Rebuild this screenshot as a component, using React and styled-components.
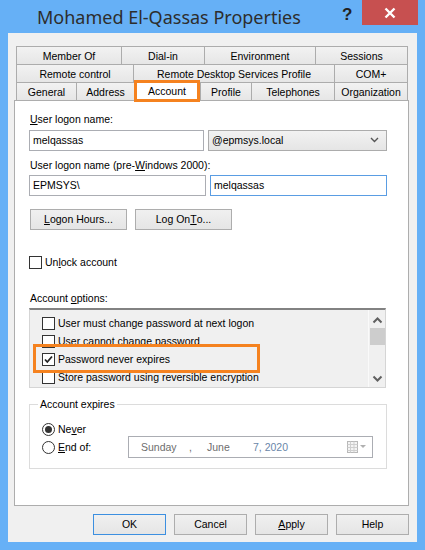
import React from 'react'
import styled, { createGlobalStyle } from 'styled-components'

const Global = createGlobalStyle`
  html, body { margin: 0; padding: 0; }
  body { font-family: "Liberation Sans", Arial, sans-serif; }
`;

const U = ({ children }) => <Mn>{children}</Mn>

function Check({ checked }) {
  return (
    <Box>
      {checked && (
        <svg width="11" height="11" viewBox="0 0 11 11">
          <path d="M2 5.5 L4.3 8 L9 2.5" fill="none" stroke="#222" strokeWidth="1.8" />
        </svg>
      )}
    </Box>
  )
}

const rows = [
  [['Member Of', 105], ['Dial-in', 83], ['Environment', 111], ['Sessions', 93]],
  [['Remote control', 117], ['Remote Desktop Services Profile', 201], ['COM+', 74]],
  [['General', 60], ['Address', 58], ['Account', 66], ['Profile', 51], ['Telephones', 83], ['Organization', 74]],
]

const options = [
  'User must change password at next logon',
  'User cannot change password',
  'Password never expires',
  'Store password using reversible encryption',
]

function App() {
  return (
    <Window>
      <Global />
      <TitleBar>
        <Title>Mohamed El-Qassas Properties</Title>
        <HelpGlyph>?</HelpGlyph>
        <CloseBtn>
          <svg width="12" height="12" viewBox="0 0 12 12">
            <path d="M1.5 1.5 L10.5 10.5 M10.5 1.5 L1.5 10.5" stroke="#fff" strokeWidth="2.4" />
          </svg>
        </CloseBtn>
      </TitleBar>
      <Client>
        <Tabs>
          {rows.map((row, i) => (
            <TabRow key={i}>
              {row.map(([name, w], j) => (
                <Tab key={name} $w={w} $last={j === row.length - 1} $active={name === 'Account'}>
                  {name}
                </Tab>
              ))}
            </TabRow>
          ))}
        </Tabs>
        <Panel>
          <Label $top={11}><U>U</U>ser logon name:</Label>
          <FieldRow $top={4}>
            <TextBox>melqassas</TextBox>
            <Select>
              @epmsys.local
              <svg width="9" height="6" viewBox="0 0 9 6">
                <path d="M1 1 L4.5 4.5 L8 1" fill="none" stroke="#555" strokeWidth="1.4" />
              </svg>
            </Select>
          </FieldRow>
          <Label $top={7}>User logon name (pre-<U>W</U>indows 2000):</Label>
          <FieldRow $top={3}>
            <TextBox>EPMSYS\</TextBox>
            <TextBox $focus>melqassas</TextBox>
          </FieldRow>
          <BtnRow>
            <Btn $w={97}><U>L</U>ogon Hours...</Btn>
            <Btn $w={97}>Log On <U>T</U>o...</Btn>
          </BtnRow>
          <CheckRow $top={25}>
            <Check />
            <span>Un<U>l</U>ock account</span>
          </CheckRow>
          <Label $top={22}>Account <U>o</U>ptions:</Label>
          <ListBox>
            <Items>
              {options.map((o) => (
                <Item key={o}>
                  <Check checked={o === 'Password never expires'} />
                  <span>{o}</span>
                </Item>
              ))}
            </Items>
            <ScrollBar>
              <svg width="11" height="7" viewBox="0 0 11 7">
                <path d="M1.5 5.5 L5.5 1.5 L9.5 5.5" fill="none" stroke="#606060" strokeWidth="2" />
              </svg>
              <Thumb />
              <Spacer />
              <svg width="11" height="7" viewBox="0 0 11 7">
                <path d="M1.5 1.5 L5.5 5.5 L9.5 1.5" fill="none" stroke="#606060" strokeWidth="2" />
              </svg>
            </ScrollBar>
            <Highlight />
          </ListBox>
          <Group>
            <Legend>Account expires</Legend>
            <RadioRow $top={11}>
              <Radio $on />
              <span>Ne<U>v</U>er</span>
            </RadioRow>
            <RadioRow $top={0}>
              <Radio />
              <RadioText><U>E</U>nd of:</RadioText>
              <DatePicker>
                <DatePart $w={48}>Sunday</DatePart>
                <DatePart $w={18}>,</DatePart>
                <DatePart $w={46}>June</DatePart>
                <DatePart $w={60} $blue>7, 2020</DatePart>
                <CalIcon>
                  <svg width="20" height="12" viewBox="0 0 20 12">
                    <rect x="0.5" y="0.5" width="10" height="11" fill="#f4f4f4" stroke="#b8b8b8" />
                    <path d="M0.5 3.5 H10.5 M0.5 6.5 H10.5 M0.5 9.5 H10.5 M3.5 0.5 V11.5 M7 0.5 V11.5" stroke="#cfcfcf" />
                    <path d="M13 4 L19 4 L16 7 Z" fill="#b0b0b0" />
                  </svg>
                </CalIcon>
              </DatePicker>
            </RadioRow>
          </Group>
        </Panel>
        <ButtonBar>
          <Btn $w={73} $default>OK</Btn>
          <Btn $w={73}>Cancel</Btn>
          <Btn $w={73}><U>A</U>pply</Btn>
          <Btn $w={73}>Help</Btn>
        </ButtonBar>
      </Client>
    </Window>
  )
}

export default App

const Window = styled.div`
  width: 425px;
  height: 550px;
  background: #66b0f6;
  display: flex;
  flex-direction: column;
  box-sizing: border-box;
  font-size: 10.5px;
  color: #000;
`;

const TitleBar = styled.div`
  height: 33px;
  display: flex;
  align-items: flex-start;
  flex-shrink: 0;
`;

const Title = styled.div`
  margin: 8px 0 0 37px;
  font-family: "Noto Sans", "Open Sans", sans-serif;
  font-size: 18px;
  line-height: 18.5px;
  color: #2d2d2d;
`;

const HelpGlyph = styled.div`
  margin: 5px 0 0 auto;
  width: 20px;
  font-family: "Liberation Sans", Arial, sans-serif;
  font-weight: bold;
  font-size: 17px;
  color: #222;
`;

const CloseBtn = styled.div`
  width: 56px;
  height: 25px;
  margin: 0 7px 0 0;
  background: #c75050;
  display: flex;
  align-items: center;
  justify-content: center;
`;

const Client = styled.div`
  flex: 1;
  margin: 0 8px 8px;
  background: #f0f0f0;
  padding: 13px 8px 0 6px;
  display: flex;
  flex-direction: column;
`;

const Tabs = styled.div`
  margin: 0 1px 0 2px;
  display: flex;
  flex-direction: column;
`;

const TabRow = styled.div`
  display: flex;
  align-items: flex-start;
`;

const Tab = styled.div`
  box-sizing: border-box;
  width: ${(p) => p.$w}px;
  height: ${(p) => (p.$active ? 22 : 18)}px;
  margin: ${(p) => (p.$active ? '-2px 0 -2px' : '0')};
  background: ${(p) => (p.$active ? '#fff' : 'linear-gradient(#f2f2f2, #e6e6e6)')};
  border: ${(p) => (p.$active ? '3px solid #f5821f' : '1px solid #acacac')};
  border-right: ${(p) => (p.$active ? '3px solid #f5821f' : p.$last ? '1px solid #acacac' : 'none')};
  border-bottom: ${(p) => (p.$active ? '3px solid #f5821f' : 'none')};
  position: relative;
  z-index: ${(p) => (p.$active ? 2 : 0)};
  display: flex;
  align-items: center;
  justify-content: center;
  white-space: nowrap;
  padding-bottom: ${(p) => (p.$active ? 1 : 0)}px;
`;

const Panel = styled.div`
  box-sizing: border-box;
  height: 406px;
  background: #fff;
  border: 1px solid #adadad;
  padding: 0 22px 0 14px;
  display: flex;
  flex-direction: column;
  align-items: flex-start;
`;

const Mn = styled.span`
  text-decoration: underline;
`;

const Label = styled.div`
  margin: ${(p) => p.$top}px 0 0 1px;
  line-height: 14px;
  white-space: nowrap;
`;

const FieldRow = styled.div`
  margin-top: ${(p) => p.$top}px;
  width: 358px;
  display: flex;
  gap: 4px;
`;

const TextBox = styled.div`
  box-sizing: border-box;
  flex: 1;
  height: 21px;
  border: 1px solid ${(p) => (p.$focus ? '#5a9de3' : '#abadb3')};
  background: #fff;
  padding: 0 3px 1px;
  display: flex;
  align-items: center;
`;

const Select = styled.div`
  box-sizing: border-box;
  flex: 1;
  height: 21px;
  border: 1px solid #acacac;
  background: linear-gradient(#f2f2f2, #e5e5e5);
  padding: 0 7px 1px 3px;
  display: flex;
  align-items: center;
  justify-content: space-between;
`;

const BtnRow = styled.div`
  margin: 13px 0 0 1px;
  display: flex;
  gap: 8px;
`;

const Btn = styled.div`
  box-sizing: border-box;
  width: ${(p) => p.$w}px;
  height: 21px;
  border: 1px solid ${(p) => (p.$default ? '#3c8fe0' : '#adadad')};
  background: linear-gradient(#f0f0f0, #e5e5e5);
  display: flex;
  align-items: center;
  justify-content: center;
  white-space: nowrap;
  padding-bottom: 1px;
`;

const CheckRow = styled.div`
  margin-top: ${(p) => p.$top}px;
  display: flex;
  align-items: center;
  gap: 3px;
  line-height: 14px;
`;

const Box = styled.div`
  box-sizing: border-box;
  width: 13px;
  height: 13px;
  border: 1px solid #333;
  background: #fff;
  display: flex;
  align-items: center;
  justify-content: center;
  flex-shrink: 0;
`;

const ListBox = styled.div`
  box-sizing: border-box;
  margin-top: 3px;
  width: 357px;
  height: 80px;
  border: 1px solid #d5d5d5;
  border-top: 2px solid #828282;
  background: #f0f0f0;
  position: relative;
  display: flex;
  overflow: hidden;
`;

const Items = styled.div`
  flex: 1;
  padding: 4px 0 0 12px;
`;

const Item = styled.div`
  height: 18px;
  display: flex;
  align-items: center;
  gap: 3px;
  white-space: nowrap;
`;

const ScrollBar = styled.div`
  width: 16px;
  border-left: 1px solid #fafafa;
  background: #f0f0f0;
  display: flex;
  flex-direction: column;
  align-items: center;
  padding: 7px 0 5px;
`;

const Thumb = styled.div`
  margin-top: 4px;
  width: 15px;
  height: 17px;
  background: #cdcdcd;
`;

const Spacer = styled.div`
  flex: 1;
`;

const Highlight = styled.div`
  position: absolute;
  left: 3px;
  top: 34px;
  width: 227px;
  height: 29px;
  box-sizing: border-box;
  border: 3px solid #f5821f;
`;

const Group = styled.fieldset`
  box-sizing: border-box;
  margin: 9px 0 0;
  padding: 0 0 0 12px;
  width: 358px;
  height: 72px;
  border: 1px solid #dcdcdc;
  min-width: 0;
`;

const Legend = styled.legend`
  margin-left: -4px;
  padding: 0 2px;
  line-height: 14px;
`;

const RadioRow = styled.div`
  margin-top: ${(p) => p.$top}px;
  display: flex;
  align-items: center;
  gap: 3px;
  line-height: 14px;
`;

const Radio = styled.div`
  box-sizing: border-box;
  width: 13px;
  height: 13px;
  border-radius: 50%;
  border: 1px solid #333;
  background: #fff;
  display: flex;
  align-items: center;
  justify-content: center;
  &::after {
    content: '';
    display: ${(p) => (p.$on ? 'block' : 'none')};
    width: 7px;
    height: 7px;
    border-radius: 50%;
    background: #333;
  }
`;

const RadioText = styled.span`
  width: 67px;
`;

const DatePicker = styled.div`
  box-sizing: border-box;
  width: 245px;
  height: 22px;
  border: 1px solid #abadb3;
  background: #fff;
  padding-left: 12px;
  display: flex;
  align-items: center;
  color: #6d6d6d;
`;

const DatePart = styled.span`
  width: ${(p) => p.$w}px;
  color: ${(p) => (p.$blue ? '#6a86a8' : '#6d6d6d')};
  white-space: nowrap;
`;

const CalIcon = styled.div`
  margin-left: auto;
  margin-right: 5px;
  display: flex;
`;

const ButtonBar = styled.div`
  margin-top: 8px;
  display: flex;
  justify-content: flex-end;
  gap: 8px;
`;
